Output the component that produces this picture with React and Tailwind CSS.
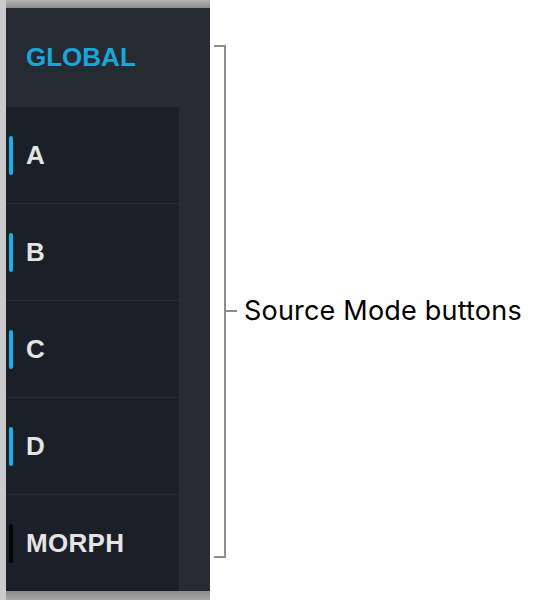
import React from "react";

const rows = [
  { label: "A", bar: "bg-[#19b2e6]" },
  { label: "B", bar: "bg-[#19b2e6]" },
  { label: "C", bar: "bg-[#19b2e6]" },
  { label: "D", bar: "bg-[#19b2e6]" },
  { label: "MORPH", bar: "bg-[#050608]" },
];

export default function App() {
  return (
    <div className="w-[540px] h-[602px] bg-white flex items-start">
      <div className="flex h-[600px]">
        <div className="w-[6px] h-full bg-[#cbcbcb]" />
        <div className="w-[204px] h-full flex flex-col">
          <div className="h-[8px] bg-gradient-to-b from-[#b4b4b4] to-[#8c8c8c]" />
          <div className="flex-1 bg-[#262b33] flex flex-col">
            <div className="h-[99px] flex items-center pl-[20px]">
              <span
                className="text-[26px] font-bold text-[#1aa6d8]"
                style={{ fontFamily: '"Liberation Sans", Arial, sans-serif' }}
              >
                GLOBAL
              </span>
            </div>
            <div className="w-[173px] flex-1 bg-[#1b2028] flex flex-col">
              {rows.map((r, i) => (
                <div
                  key={r.label}
                  className={`flex-1 flex items-center ${i < rows.length - 1 ? "border-b border-[#252b33]" : ""}`}
                >
                  <div className={`ml-[3px] w-[4px] h-[39px] rounded-full ${r.bar}`} />
                  <span
                    className="ml-[13px] text-[26px] font-bold text-[#e4e4e4] tracking-[0.3px]"
                    style={{ fontFamily: '"Liberation Sans", Arial, sans-serif' }}
                  >
                    {r.label}
                  </span>
                </div>
              ))}
            </div>
          </div>
          <div className="h-[9px] bg-gradient-to-b from-[#8a8a8a] to-[#a8a8a8]" />
        </div>
      </div>
      <div className="mt-[45px] flex items-start">
        <div className="ml-[4px] w-[12px] h-[513px] border-t-2 border-r-2 border-b-2 border-[#8e8e8e]" />
        <div className="mt-[251px] h-[30px] flex items-center">
          <div className="w-[11px] h-[2px] bg-[#8e8e8e]" />
          <span
            className="ml-[7px] text-[27px] tracking-[0.2px] text-black whitespace-nowrap"
            style={{ fontFamily: 'Inter, "Liberation Sans", sans-serif' }}
          >
            Source Mode buttons
          </span>
        </div>
      </div>
    </div>
  );
}
